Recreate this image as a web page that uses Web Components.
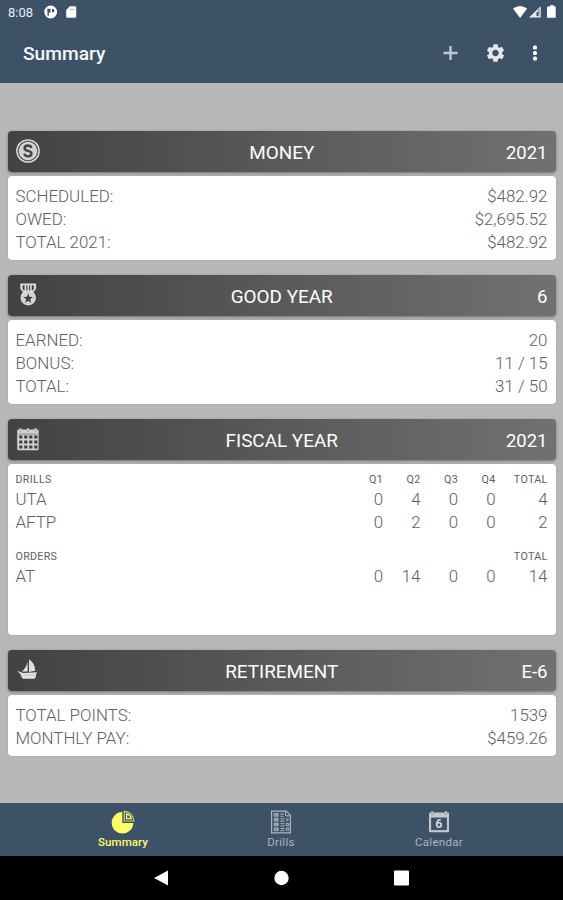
<!DOCTYPE html>
<html lang="en">
<head>
<meta charset="UTF-8">
<title>Summary</title>
<style>
    body {
        margin: 0;
        font-family: Roboto, "Liberation Sans", sans-serif;
        background: #b7b7b7;
    }
</style>
</head>
<body>
<summary-app></summary-app>

<script>
const icons = {
    coin: `<svg width="24" height="24" viewBox="0 0 24 24" fill="none" stroke="#d8d8d8">
        <circle cx="12" cy="12" r="11.1" stroke-width="1.5"/>
        <circle cx="12" cy="12" r="8.5" fill="#d0d0d0" stroke="#dadada" stroke-width="1.4"/>
        <circle cx="12" cy="12" r="9.8" stroke="#666" stroke-width=".8"/>
        <path d="M15.5 9C14.9 7.200 13.500 6.500 12 6.500c-2 0-3.500 1-3.500 2.700 0 3.500 7 1.900 7 5.300 0 1.700-1.500 2.800-3.500 2.800-1.900 0-3.200-.8-3.700-2.600" stroke="#424242" stroke-width="2.300"/>
    </svg>`,
    medal: `<svg width="24" height="24" viewBox="0 0 24 24">
        <path d="M4.300.6h15.800v4.600l-1.300 2.900-1.700.7a7.700 7.700 0 1 1-9.800 0l-1.700-.7-1.300-2.900z" fill="#dcdcdc"/>
        <path d="M6.600 2.200h2v5.200l-2-.8zM10.300 2.200h1.200v5.200h-1.200zM13 2.200h1.200v5.200H13zM15.800 2.200h2v4.400l-2 .8z" fill="#454545"/>
        <circle cx="12.200" cy="15.200" r="5.600" fill="none" stroke="#aaa" stroke-width=".5"/>
        <path d="M12.200 10.500l1.400 3.200 3.400.3-2.600 2.300.8 3.400-3-1.800-3 1.800.8-3.400L7.400 14l3.400-.3z" fill="#424242"/>
    </svg>`,
    calendar: `<svg width="24" height="24" viewBox="0 0 24 24">
        <path d="M1.200 3.600q0-1 1-1h1.300V1.200h2v1.400h5.500V1.200h2v1.400h5.500V1.200h2v1.400h.8q1.300 0 1.300 1v18.200q0 1.500-1.500 1.500H2.700q-1.500 0-1.500-1.500z" fill="#d2d2d2"/>
        <path d="M2.400 7h19M3.700 4.100h1.500M11.200 4.100h1.500M18.800 4.100h1.500" stroke="#777" stroke-width=".8"/>
        <g stroke="#404040" stroke-width="3.100" stroke-dasharray="3.200 1.800">
            <path d="M3.200 10h18.400M3.200 15h18.400M3.200 20h18.400"/>
        </g>
    </svg>`,
    boat: `<svg width="24" height="24" viewBox="0 0 24 24" fill="#e0e0e0">
        <path d="M13 1.300q6.400 4.600 6.200 11.500L13 13.900zM11.600 3.400v10.200H5.700Q10.500 9.500 11.600 3.400z"/>
        <path d="M1.200 12.800l5.800 2.100 13.800-.7-1.200 5.300q-.3 1.300-1.800 1.300H7.500q-1.300 0-1.900-1.700l-.9-2.600z"/>
        <path d="M6.500 17h13.200" stroke="#bbb" stroke-width=".6"/>
    </svg>`,
    pie: `<svg width="24" height="24" viewBox="0 0 24 24">
        <path d="M11.300 2A10.800 10.800 0 1 0 22.300 13h-11z" fill="#ffff66"/>
        <path d="M13.300 1.400A10 10 0 0 1 22.900 11h-9.600z" fill="none" stroke="#d5d968" stroke-width="1.200"/>
        <path d="M15.600 3.900v4.700h4.800q-1-3.600-4.800-4.700z" fill="#3d5267" stroke="#ffff66" stroke-width="1.200"/>
    </svg>`,
    drills: `<svg width="24" height="24" viewBox="0 0 24 24" fill="none" stroke="#aeb8c2" stroke-width="1.200">
        <path d="M2.600 1.200h14.600l4.200 4.200v17.400H2.600z"/>
        <path d="M5.200 3.500h4v2.800h-4zM5.200 8.300h4v2.800h-4zM5.200 13.100h4v2.800h-4zM5.200 17.900h4v2.800h-4z" fill="#8795a2" stroke-width=".8"/>
        <path d="M11.400 4h3.500M11.400 6.300h3M11.400 8.900h4M11.400 11.200h4M11.400 13.700h4M11.400 16h4M11.400 18.500h4M11.400 20.700h4" stroke-width="1"/>
        <path d="M16.500 1.500v4.300h4.500M17 8.500l2.500 1.200-2.500 1.200M17.200 13.500h2.500v2.200h-2.500zM17.200 18h2.500v2.200h-2.500z" stroke-width="1"/>
    </svg>`,
    date: `<svg width="24" height="24" viewBox="0 0 24 24">
        <path d="M2 3.600q0-1 1-1h1.200V1.200h2v1.400h11.600V1.200h2v1.400H21q1 0 1 1v17.700q0 1-1 1H3q-1 0-1-1z" fill="#c5c8cb"/>
        <path d="M4.100 7.500h15.800v12.600H4.100z" fill="#3d5267"/>
        <path d="M4.300 4h2M17.700 4h2" stroke="#7c8791" stroke-width="1"/>
        <text x="12" y="18.300" text-anchor="middle" font-size="12.500" font-weight="700" fill="#d3d7da">6</text>
    </svg>`
};

class StatusBar extends HTMLElement {
    constructor() {
        super();
        this.attachShadow({mode: 'open'}).innerHTML = `
        <style>
            :host {
                display: flex;
                align-items: center;
                box-sizing: border-box;
                height: 24px;
                padding: 0 6px 0 8px;
                color: #e8eef4;
                font-size: 13px;
            }

            .time {
                width: 36px;
            }

            .space {
                flex: 1;
            }

            svg {
                display: block;
            }

            .card {
                margin-left: 7px;
            }
        </style>
        <span class="time">8:08</span>
        <svg width="14" height="14" viewBox="0 0 14 14">
            <circle cx="6.700" cy="7" r="6.400" fill="#fff"/>
            <path d="M3.300 3.800h3.200v3.600H4.900v3.400H3.500zM8 3.800q2.400-.2 2.400 1.700T8 7.400z" fill="#3d5267"/>
        </svg>
        <svg class="card" width="14" height="14" viewBox="0 0 14 14">
            <path d="M4.800 1.200H10q1.200 0 1.200 1.200v9.200q0 1.200-1.200 1.200H2.400q-1.200 0-1.200-1.200V4.900z" fill="#fff"/>
            <path d="M4.200 4.300h5.500" stroke="#a9b4bf" stroke-width="1"/>
        </svg>
        <span class="space"></span>
        <svg width="45" height="16" viewBox="0 0 45 16">
            <path d="M1 4.600Q8-.8 15.200 4.600L8.100 14z" fill="#fff"/>
            <path d="M28.800 2.200v11.200H17z" fill="#e4e9ed"/>
            <path d="M24.500 8h1.700v4h-1.700z" fill="#3d5267"/>
            <path d="M26.200 6v6.300h1.400V4.500z" fill="#7d8b99"/>
            <path d="M36 2.500h2V1.200h4v1.300h1.700v11.300H35V3.500q0-1 1-1z" fill="#fff"/>
        </svg>`;
    }
}

class AppBar extends HTMLElement {
    constructor() {
        super();
        this.attachShadow({mode: 'open'}).innerHTML = `
        <style>
            :host {
                display: flex;
                align-items: center;
                box-sizing: border-box;
                height: 59px;
                padding: 0 17px 0 23px;
                color: #f5f8fb;
            }

            h1 {
                flex: 1;
                margin: 0;
                font-size: 19.200px;
                font-weight: 500;
            }

            svg {
                display: block;
                margin-top: -1px;
            }
        </style>
        <h1><slot></slot></h1>
        <svg width="106" height="24" viewBox="0 0 106 24">
            <path d="M10.500 5v14M3.500 12h14" stroke="#bdc8d3" stroke-width="2.400"/>
            <g transform="translate(44.600 1.100) scale(.91)">
                <path fill="#e4e6ea" d="M19.140 12.940c.04-.3.06-.61.06-.94 0-.32-.02-.64-.07-.94l2.030-1.580c.18-.14.23-.41.12-.61l-1.920-3.320c-.12-.22-.37-.29-.59-.22l-2.390.96c-.5-.38-1.030-.7-1.620-.94l-.36-2.540c-.04-.24-.24-.41-.48-.41h-3.840c-.24 0-.43.17-.47.41l-.36 2.540c-.59.24-1.130.57-1.620.94l-2.390-.96c-.22-.08-.47 0-.59.22L2.740 8.870c-.12.21-.08.47.12.61l2.030 1.580c-.05.3-.09.63-.09.94s.02.64.07.94l-2.030 1.580c-.18.14-.23.41-.12.61l1.920 3.320c.12.22.37.29.59.22l2.390-.96c.5.38 1.030.7 1.620.94l.36 2.540c.05.24.24.41.48.41h3.840c.24 0 .44-.17.47-.41l.36-2.540c.59-.24 1.130-.56 1.620-.94l2.390.96c.22.08.47 0 .59-.22l1.920-3.320c.12-.22.07-.47-.12-.61l-2.010-1.580zM12 15.600c-1.980 0-3.600-1.620-3.600-3.600s1.620-3.600 3.600-3.600 3.600 1.620 3.600 3.600-1.620 3.600-3.600 3.600z"/>
            </g>
            <g fill="#fff">
                <rect x="93" y="4.500" width="4" height="4" rx="1.500"/>
                <rect x="93" y="10" width="4" height="4" rx="1.500"/>
                <rect x="93" y="15.500" width="4" height="4" rx="1.500"/>
            </g>
        </svg>`;
    }
}

class SummaryCard extends HTMLElement {
    connectedCallback() {
        this.attachShadow({mode: 'open'}).innerHTML = `
        <style>
            :host {
                display: block;
            }

            header {
                display: grid;
                grid-template-columns: 1fr auto 1fr;
                align-items: center;
                box-sizing: border-box;
                height: 41px;
                padding: 2px 8px 0;
                border-radius: 4px;
                background: linear-gradient(90deg, #424242, #717171);
                box-shadow: 0 1px 3px rgba(0, 0, 0, 0.4);
                color: #fff;
                font-size: 18.900px;
            }

            svg {
                display: block;
                margin-top: -3px;
            }

            .value {
                font-size: 18.500px;
                text-align: right;
            }

            .content {
                box-sizing: border-box;
                height: var(--content-height, 84px);
                margin-top: 4px;
                padding: 9px 8px 0 7.500px;
                border-radius: 4px;
                background: #fff;
                box-shadow: 0 0 2px rgba(0, 0, 0, 0.15);
            }
        </style>
        <header>
            ${icons[this.getAttribute('icon')]}
            <span>${this.getAttribute('heading')}</span>
            <span class="value">${this.getAttribute('value')}</span>
        </header>
        <div class="content"><slot></slot></div>`;
    }
}

class StatRow extends HTMLElement {
    connectedCallback() {
        this.attachShadow({mode: 'open'}).innerHTML = `
        <style>
            :host {
                display: flex;
                justify-content: space-between;
                color: #606060;
                font-size: 16.900px;
                font-weight: 300;
                line-height: 23px;
            }
        </style>
        <span>${this.getAttribute('label')}</span>
        <span><slot></slot></span>`;
    }
}

class QuarterRow extends HTMLElement {
    connectedCallback() {
        const cells = this.getAttribute('cells').split(',');
        this.attachShadow({mode: 'open'}).innerHTML = `
        <style>
            :host {
                display: grid;
                grid-template-columns: 1fr 37.500px 37.500px 37.500px 52px;
                color: #606060;
                font-size: 16.900px;
                font-weight: 300;
                line-height: 23px;
                text-align: right;
            }

            :host([head]) {
                font-size: 10.700px;
                font-weight: 400;
                line-height: 17px;
                letter-spacing: 0.300px;
            }

            .first {
                display: flex;
                justify-content: space-between;
            }
        </style>
        <span class="first"><span>${this.getAttribute('label')}</span><span>${cells[0]}</span></span>
        ${cells.slice(1).map(cell => `<span>${cell}</span>`).join('')}`;
    }
}

class NavTab extends HTMLElement {
    connectedCallback() {
        this.attachShadow({mode: 'open'}).innerHTML = `
        <style>
            :host {
                display: flex;
                flex-direction: column;
                align-items: center;
                width: 158px;
                padding-top: 7px;
                color: #a9b4bf;
                font-size: 11.500px;
                line-height: 14px;
                letter-spacing: 0.300px;
            }

            :host([active]) {
                color: #ffff66;
                font-weight: 500;
                letter-spacing: 0.100px;
            }

            svg {
                display: block;
                margin-bottom: 1px;
            }
        </style>
        ${icons[this.getAttribute('icon')]}
        <span><slot></slot></span>`;
    }
}

class SystemNav extends HTMLElement {
    constructor() {
        super();
        this.attachShadow({mode: 'open'}).innerHTML = `
        <style>
            :host {
                display: flex;
                align-items: center;
                justify-content: center;
                gap: 104px;
                box-sizing: border-box;
                height: 44px;
                padding-right: 2px;
                background: #000;
            }
        </style>
        <svg width="16" height="16" viewBox="0 0 16 16"><path d="M1 8L15 .5v15z" fill="#fff"/></svg>
        <svg width="16" height="16" viewBox="0 0 16 16"><circle cx="8.500" cy="8" r="7.200" fill="#fff"/></svg>
        <svg width="16" height="16" viewBox="0 0 16 16"><rect x="1" y=".5" width="15" height="15" rx="1" fill="#fff"/></svg>`;
    }
}

class SummaryApp extends HTMLElement {
    constructor() {
        super();
        this.attachShadow({mode: 'open'}).innerHTML = `
        <style>
            :host {
                display: flex;
                flex-direction: column;
                height: 900px;
                overflow: hidden;
            }

            .top, nav {
                background: #3d5267;
            }

            main {
                display: flex;
                flex: 1;
                flex-direction: column;
                gap: 15px;
                padding: 48px 7.500px 0 8px;
            }

            .fiscal {
                --content-height: 171px;
            }

            .fiscal quarter-row:first-child {
                margin-top: -2px;
            }

            .orders {
                margin-top: 14px;
            }

            .retirement {
                --content-height: 61px;
            }

            nav {
                display: flex;
                justify-content: center;
                box-sizing: border-box;
                height: 53px;
                padding-right: 1px;
            }
        </style>
        <div class="top">
            <status-bar></status-bar>
            <app-bar>Summary</app-bar>
        </div>
        <main>
            <summary-card icon="coin" heading="MONEY" value="2021">
                <stat-row label="SCHEDULED:">$482.92</stat-row>
                <stat-row label="OWED:">$2,695.52</stat-row>
                <stat-row label="TOTAL 2021:">$482.92</stat-row>
            </summary-card>
            <summary-card icon="medal" heading="GOOD YEAR" value="6">
                <stat-row label="EARNED:">20</stat-row>
                <stat-row label="BONUS:">11 / 15</stat-row>
                <stat-row label="TOTAL:">31 / 50</stat-row>
            </summary-card>
            <summary-card class="fiscal" icon="calendar" heading="FISCAL YEAR" value="2021">
                <quarter-row head label="DRILLS" cells="Q1,Q2,Q3,Q4,TOTAL"></quarter-row>
                <quarter-row label="UTA" cells="0,4,0,0,4"></quarter-row>
                <quarter-row label="AFTP" cells="0,2,0,0,2"></quarter-row>
                <quarter-row class="orders" head label="ORDERS" cells=",,,,TOTAL"></quarter-row>
                <quarter-row label="AT" cells="0,14,0,0,14"></quarter-row>
            </summary-card>
            <summary-card class="retirement" icon="boat" heading="RETIREMENT" value="E-6">
                <stat-row label="TOTAL POINTS:">1539</stat-row>
                <stat-row label="MONTHLY PAY:">$459.26</stat-row>
            </summary-card>
        </main>
        <nav>
            <nav-tab icon="pie" active>Summary</nav-tab>
            <nav-tab icon="drills">Drills</nav-tab>
            <nav-tab icon="date">Calendar</nav-tab>
        </nav>
        <system-nav></system-nav>`;
    }
}

customElements.define('status-bar', StatusBar);
customElements.define('app-bar', AppBar);
customElements.define('summary-card', SummaryCard);
customElements.define('stat-row', StatRow);
customElements.define('quarter-row', QuarterRow);
customElements.define('nav-tab', NavTab);
customElements.define('system-nav', SystemNav);
customElements.define('summary-app', SummaryApp);
</script>
</body>
</html>
